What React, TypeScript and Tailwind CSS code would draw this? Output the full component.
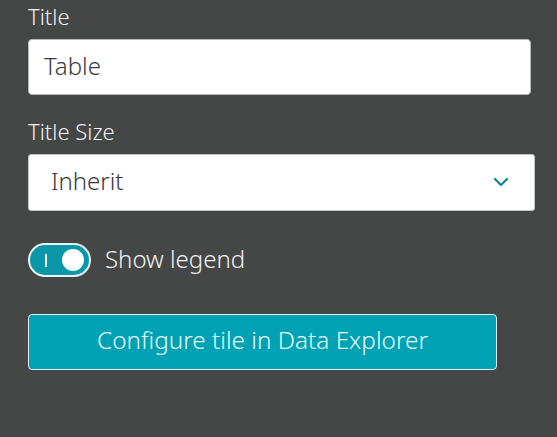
export default function App() {
  return (
    <div
      className="min-h-[437px] w-[557px] bg-[#454646] pl-[28px] pt-[1px] font-[350]"
      style={{ fontFamily: '"Noto Sans", "Open Sans", sans-serif' }}
    >
      <label className="block text-[22px] leading-[31px] text-[#f2f2f2]">Title</label>
      <div className="mt-[7px] flex h-[56px] w-[503px] items-center rounded-[4px] border border-[#b8b8b8] bg-white pb-[3px] pl-[15px] text-[24px] text-[#3a3a3a]">
        Table
      </div>

      <label className="mt-[21px] block text-[22px] leading-[31px] text-[#f2f2f2]">Title Size</label>
      <div className="mt-[7px] flex h-[57px] w-[507px] items-center justify-between rounded-[3px] border border-[#c4c4c4] bg-white pb-[3px] pl-[22px] pr-[25px] text-[24px] text-[#3a3a3a]">
        <span>Inherit</span>
        <svg width="16" height="10" viewBox="0 0 16 10" fill="none" className="mt-[2px]">
          <path d="M2 2l6 6 6-6" stroke="#1a8a99" strokeWidth="2.4" strokeLinecap="round" strokeLinejoin="round" />
        </svg>
      </div>

      <div className="mt-[30px] flex items-center gap-[14px]">
        <div className="flex h-[34px] w-[63px] items-center rounded-full border-2 border-[#e8f4f5] bg-[#0a98a8] pl-[15px] pr-[5px]">
          <span className="h-[13px] w-[2px] bg-white" />
          <span className="ml-auto h-[22px] w-[22px] rounded-full bg-white" />
        </div>
        <span className="pb-[2px] text-[24px] text-[#f2f2f2]">Show legend</span>
      </div>

      <button className="mt-[35px] flex h-[56px] w-[469px] items-center justify-center rounded-[4px] border border-[#e0f0f2] bg-[#00a1b2] pb-[3px] text-[24.3px] text-[#e3fbfd]">
        Configure tile in Data Explorer
      </button>
    </div>
  );
}
